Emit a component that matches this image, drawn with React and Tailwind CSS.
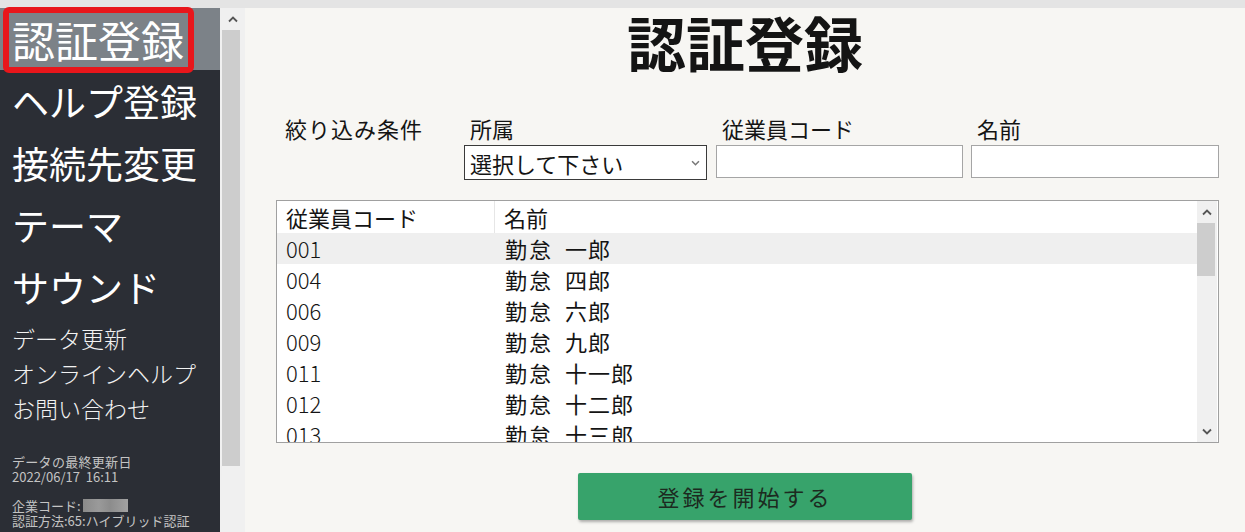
import React from "react";

const Up = ({ className = "" }) => (
  <svg width="10" height="7" viewBox="0 0 10 7" className={className}>
    <path d="M1 5.5 L5 1.5 L9 5.5" fill="none" stroke="#555" strokeWidth="1.8" />
  </svg>
);
const Down = ({ className = "", color = "#555", w = 10, h = 7 }) => (
  <svg width={w} height={h} viewBox="0 0 10 7" className={className}>
    <path d="M1 1.5 L5 5.5 L9 1.5" fill="none" stroke={color} strokeWidth="1.8" />
  </svg>
);

const rows = [
  ["001", "勤怠", "一郎"],
  ["004", "勤怠", "四郎"],
  ["006", "勤怠", "六郎"],
  ["009", "勤怠", "九郎"],
  ["011", "勤怠", "十一郎"],
  ["012", "勤怠", "十二郎"],
  ["013", "勤怠", "十三郎"],
];

export default function App() {
  return (
    <div className="w-[1245px] h-[532px] overflow-hidden flex flex-col font-['Noto_Sans_CJK_JP',sans-serif] bg-[#f7f6f3]">
      <div className="h-[8px] bg-[#e4e4e4] shrink-0" />
      <div className="flex h-[524px]">
        {/* Sidebar */}
        <div className="w-[220px] bg-[#2b2e35] text-white flex flex-col shrink-0">
          <div className="h-[62px] bg-[#7c8288] relative">
            <div className="pl-[12px] text-[43px] leading-[62px] whitespace-nowrap">認証登録</div>
            <div className="absolute left-[3px] top-[-1px] w-[191px] h-[66px] border-[6px] border-[#e8161b] rounded-[6px]" />
          </div>
          {["ヘルプ登録", "接続先変更", "テーマ", "サウンド"].map((t) => (
            <div key={t} className="h-[62px] pl-[12px] text-[37px] leading-[62px] whitespace-nowrap">
              {t}
            </div>
          ))}
          <div className="mt-[3px] flex flex-col">
            {["データ更新", "オンラインヘルプ", "お問い合わせ"].map((t) => (
              <div key={t} className="h-[35px] pl-[12px] text-[23px] leading-[35px] font-light whitespace-nowrap text-[#f2f2f2]">
                {t}
              </div>
            ))}
          </div>
          <div className="mt-[28px] pl-[12px] text-[#c4c4c4] text-[13px] leading-[15px] whitespace-nowrap">
            <div className="tracking-[0.3px]">データの最終更新日</div>
            <div>2022/06/17&nbsp;&nbsp;16:11</div>
            <div className="mt-[14px] flex items-center">
              企業コード:
              <span className="inline-block ml-[2px] w-[45px] h-[13px] bg-[linear-gradient(90deg,#8a8a8a_0%,#9a9a9a_35%,#8c8c8c_60%,#a2a2a2_100%)]" />
            </div>
            <div>認証方法:65:ハイブリッド認証</div>
          </div>
        </div>
        {/* Sidebar scrollbar */}
        <div className="w-[25px] bg-[#f0f0f0] flex flex-col shrink-0">
          <div className="h-[22px] flex items-center justify-center">
            <Up />
          </div>
          <div className="ml-[2px] w-[18px] h-[436px] bg-[#cdcdcd]" />
        </div>
        {/* Main */}
        <div className="flex-1 flex flex-col text-[#141414]">
          <div className="mt-[4px] text-center text-[59px] leading-[59px] font-bold">認証登録</div>
          <div className="pl-[31px] pr-[26px] flex flex-col">
            <div className="mt-[42px] flex">
              <div className="w-[188px] pl-[9px] text-[22px] leading-[30px] tracking-[1px] whitespace-nowrap">
                絞り込み条件
              </div>
              <div className="w-[243px] flex flex-col">
                <div className="pl-[6px] text-[22px] leading-[30px]">所属</div>
                <div className="mt-[2px] h-[35px] border border-[#3a3a3a] bg-white flex items-center justify-between pl-[5px] pr-[6px]">
                  <span className="text-[22px] leading-[30px] whitespace-nowrap">選択して下さい</span>
                  <Down color="#777" w={9} h={6} />
                </div>
              </div>
              <div className="ml-[9px] w-[247px] flex flex-col">
                <div className="pl-[6px] text-[22px] leading-[30px] whitespace-nowrap">従業員コード</div>
                <div className="mt-[2px] h-[33px] border border-[#a5a5a5] bg-white" />
              </div>
              <div className="ml-[8px] w-[248px] flex flex-col">
                <div className="pl-[6px] text-[22px] leading-[30px]">名前</div>
                <div className="mt-[2px] h-[33px] border border-[#a5a5a5] bg-white" />
              </div>
            </div>
            {/* List */}
            <div className="mt-[20px] h-[243px] border border-[#a0a0a0] bg-white flex overflow-hidden">
              <div className="flex-1 flex flex-col overflow-hidden">
                <div className="h-[32px] shrink-0 flex text-[22px] leading-[32px]">
                  <div className="w-[218px] pl-[9px] border-r border-[#e6e6e6] whitespace-nowrap">従業員コード</div>
                  <div className="pl-[9px]">名前</div>
                </div>
                {rows.map(([c, a, b], i) => (
                  <div
                    key={c}
                    className={`h-[31px] shrink-0 flex text-[22px] leading-[31px] ${i === 0 ? "bg-[#efefef]" : ""}`}
                  >
                    <div className="w-[219px] pl-[9px] font-light">{c}</div>
                    <div className="pl-[9px] whitespace-nowrap flex">
                      <span className="tracking-[2px]">{a}</span>
                      <span className="ml-[12px] tracking-[1px]">{b}</span>
                    </div>
                  </div>
                ))}
              </div>
              <div className="w-[20px] bg-[#f0f0f0] flex flex-col shrink-0 mr-[1px]">
                <div className="h-[22px] flex items-center justify-center">
                  <Up />
                </div>
                <div className="w-[18px] h-[53px] bg-[#cdcdcd]" />
                <div className="flex-1" />
                <div className="h-[22px] flex items-center justify-center">
                  <Down />
                </div>
              </div>
            </div>
          </div>
          <div className="mt-[30px] self-center w-[334px] h-[47px] bg-[#37a36b] rounded-[2px] shadow-[1px_2px_3px_rgba(0,0,0,0.3)] flex items-center justify-center text-[22px] tracking-[3px] text-[#1c2a20]">
            登録を開始する
          </div>
        </div>
      </div>
    </div>
  );
}
